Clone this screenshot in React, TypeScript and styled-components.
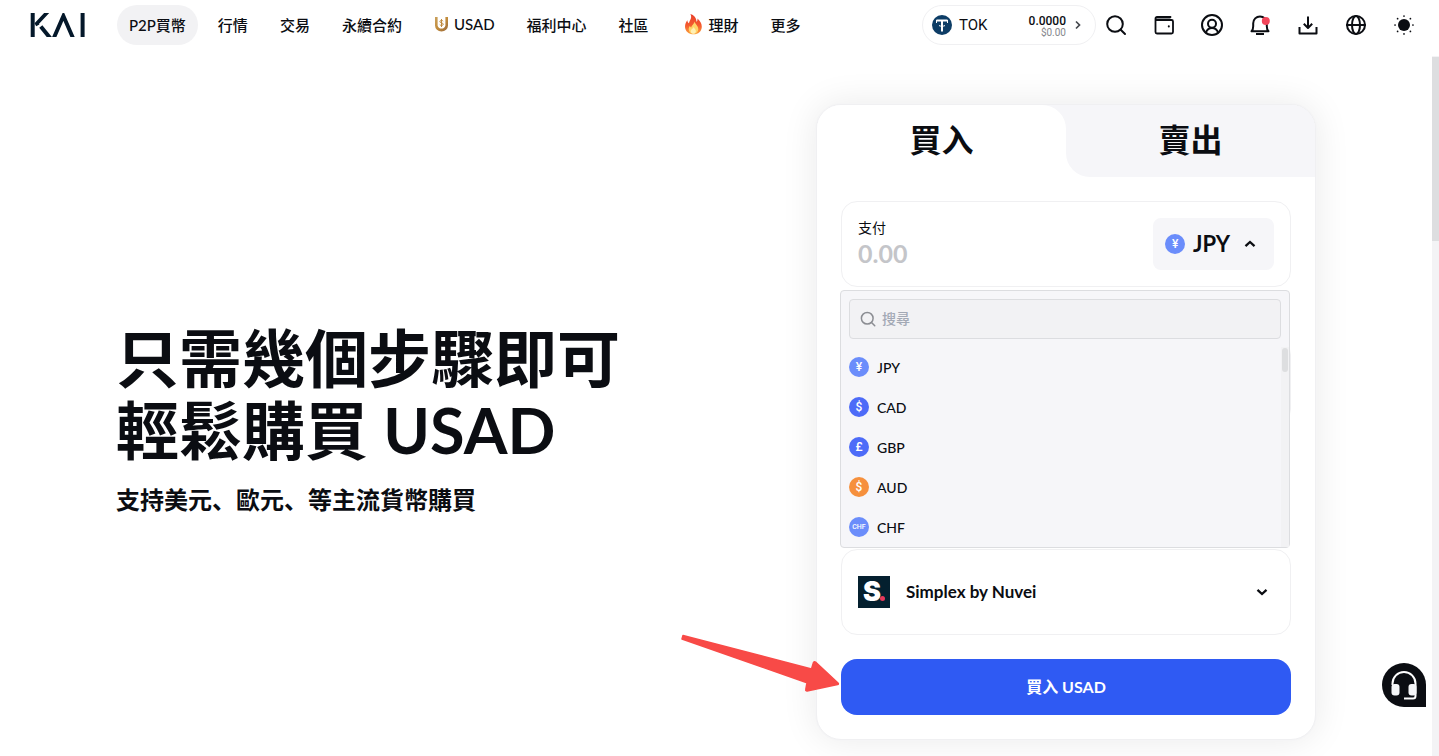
import React, { useState } from 'react';
import styled, { createGlobalStyle, css } from 'styled-components';

const ink = '#0b0d12';
const line = '#f0f0f2';
const soft = '#f6f6f9';
const sans = "Lato, 'Noto Sans CJK SC', 'Noto Sans CJK TC', sans-serif";

const GlobalStyle = createGlobalStyle`
  *, *::before, *::after { box-sizing: border-box; }
  html, body, #root { height: 100%; }
  body { margin: 0; background: #fff; color: ${ink}; font-family: ${sans}; overflow: hidden; }
  button, input { font-family: inherit; color: inherit; }
  button { border: 0; padding: 0; background: none; cursor: pointer; }
  a { color: inherit; text-decoration: none; }
  svg { display: block; flex: none; }
`;

const Page = styled.div`
  display: flex;
  flex-direction: column;
  height: 100%;
`;

const Header = styled.header`
  display: flex;
  align-items: center;
  flex: none;
  padding: 5px 23px 11px 30px;
`;

const Logo = styled.a`
  width: 87px;
  flex: none;
`;

const Nav = styled.nav`
  display: flex;
  gap: 8px;
  flex: 1;
`;

const NavLink = styled.a<{ $active?: boolean }>`
  display: flex;
  align-items: center;
  gap: 4px;
  height: 40px;
  padding: 0 12px 2px;
  border-radius: 20px;
  font-size: 15px;
  font-weight: 500;
  white-space: nowrap;
  background: ${(p) => (p.$active ? '#f2f2f4' : 'transparent')};
`;

const Balance = styled.button`
  display: flex;
  align-items: center;
  width: 174px;
  height: 40px;
  padding: 0 11px 0 9px;
  border: 1px solid ${line};
  border-radius: 20px;
  font-family: Roboto, sans-serif;
`;

const Token = styled.span`
  flex: 1;
  margin-left: 7px;
  text-align: left;
  font-size: 15px;
`;

const Amounts = styled.span`
  display: flex;
  flex-direction: column;
  align-items: flex-end;
  margin-right: 6px;
  padding-top: 4px;
  font-size: 12px;
  line-height: 12px;
  font-weight: 500;

  small {
    font-size: 10px;
    line-height: 12px;
    font-weight: 400;
    color: #85878c;
  }
`;

const Tools = styled.div`
  display: flex;
  gap: 24px;
  margin-left: 8px;
`;

const IconButton = styled.button`
  width: 24px;
  height: 24px;
`;

const Body = styled.div`
  display: flex;
  flex: 1;
  min-height: 0;
`;

const Main = styled.main`
  flex: 1;
  overflow: hidden;
  padding: 48px 32px;
`;

const Hero = styled.section`
  display: flex;
  align-items: center;
  justify-content: space-between;
  max-width: 1200px;
  margin: 0 auto;
`;

const Intro = styled.div`
  padding-bottom: 4px;
`;

const Title = styled.h1`
  margin: 0 0 16px;
  font-size: 63px;
  line-height: 72px;
  font-weight: 700;
`;

const Subtitle = styled.p`
  margin: 0;
  font-size: 24px;
  line-height: 36px;
  font-weight: 700;
`;

const Card = styled.section`
  position: relative;
  width: 500px;
  flex: none;
  border: 1px solid ${line};
  border-radius: 25px;
  background: #fff;
  box-shadow: 0 0 0 1px #f5f5f6, 0 0 36px rgba(0, 0, 0, 0.09);
`;

const TabList = styled.div`
  display: flex;
  border-radius: 24px 24px 0 0;
  overflow: hidden;
  background: linear-gradient(${soft} 50%, #fff 50%);
`;

const Tab = styled.button<{ $active?: boolean }>`
  flex: 1;
  height: 72px;
  padding-bottom: 3px;
  font-size: 32px;
  line-height: 68px;
  font-weight: 700;
  ${(p) =>
    p.$active
      ? css`background: #fff; border-radius: 0 24px 0 0;`
      : css`background: ${soft}; border-radius: 0 0 0 24px;`}
`;

const Form = styled.form`
  padding: 24px;
`;

const Field = styled.div`
  position: relative;
  display: flex;
  align-items: center;
  justify-content: space-between;
  width: 100%;
  height: 86px;
  padding: 0 16px;
  border: 1px solid ${line};
  border-radius: 16px;
  background: #fff;
`;

const ReceiveField = styled(Field)`
  margin: 52px 0 124px;
`;

const AmountGroup = styled.div`
  display: flex;
  flex-direction: column;
  padding-bottom: 2px;
`;

const AmountLabel = styled.label`
  font-size: 14px;
  line-height: 20px;
`;

const AmountInput = styled.input`
  width: 200px;
  height: 30px;
  padding: 0;
  border: 0;
  outline: 0;
  background: none;
  font-size: 25px;
  font-weight: 700;
  &::placeholder { color: #c4c5c9; opacity: 1; }
`;

const CurrencyButton = styled.button`
  display: flex;
  align-items: center;
  gap: 8px;
  height: 52px;
  padding: 0 12px;
  border-radius: 8px;
  background: ${soft};
  font-size: 22px;
  line-height: 24px;
  font-weight: 700;
`;

const Coin = styled.span<{ $color: string; $small?: boolean }>`
  display: flex;
  align-items: center;
  justify-content: center;
  width: 20px;
  height: 20px;
  flex: none;
  border-radius: 50%;
  background: ${(p) => p.$color};
  color: #fff;
  font-family: Roboto, sans-serif;
  font-size: ${(p) => (p.$small ? 7 : 12)}px;
  line-height: 20px;
  font-weight: 500;
`;

const Dropdown = styled.div`
  position: absolute;
  z-index: 1;
  top: 88px;
  left: -2px;
  width: 450px;
  padding: 8px 0 0 8px;
  border: 1px solid #dcdde0;
  border-radius: 4px;
  background: ${soft};
`;

const SearchBox = styled.label`
  display: flex;
  align-items: center;
  gap: 5px;
  height: 40px;
  margin: 0 8px 8px 0;
  padding: 0 9px;
  border: 1px solid #dcdde0;
  border-radius: 4px;
  background: #f2f2f4;
  color: #8b8d92;
`;

const SearchInput = styled.input`
  flex: 1;
  padding: 0 0 2px;
  border: 0;
  outline: 0;
  background: none;
  font-size: 14px;
  font-weight: 500;
  &::placeholder { color: #a3a9b5; opacity: 1; }
`;

const ListArea = styled.div`
  display: flex;
`;

const Options = styled.div`
  flex: 1;
`;

const Option = styled.button`
  display: flex;
  align-items: center;
  gap: 8px;
  width: 100%;
  height: 40px;
  font-size: 14px;
  font-weight: 500;
`;

const ListTrack = styled.div`
  width: 8px;
  padding: 1px;
  background: #f2f2f4;
`;

const ListThumb = styled.div`
  height: 24px;
  border-radius: 3px;
  background: #dddee0;
`;

const ProviderField = styled(Field).attrs({ as: 'button', type: 'button' })`
  justify-content: flex-start;
  gap: 16px;
  font-size: 17px;
  font-weight: 700;
`;

const ProviderName = styled.span`
  flex: 1;
  padding-bottom: 2px;
  text-align: left;
`;

const ChevronBox = styled.span`
  display: flex;
  align-items: center;
  justify-content: center;
  width: 24px;
  height: 24px;
`;

const ProviderLogo = styled.span`
  position: relative;
  width: 32px;
  height: 32px;
  padding-left: 5px;
  background: #04202f;
  color: #fff;
  font-family: Inter, sans-serif;
  font-size: 27px;
  line-height: 32px;
  font-weight: 900;
  text-align: left;

  &::after {
    content: '';
    position: absolute;
    right: 5px;
    bottom: 7px;
    width: 5px;
    height: 5px;
    border-radius: 50%;
    background: #e6395b;
  }
`;

const Submit = styled.button`
  width: 100%;
  height: 56px;
  margin-top: 24px;
  padding-bottom: 3px;
  border-radius: 16px;
  background: #2f5af3;
  color: #fff;
  font-size: 16px;
  font-weight: 700;
`;

const Arrow = styled.svg`
  position: absolute;
  left: -137px;
  bottom: 45px;
  pointer-events: none;
`;

const ScrollTrack = styled.div`
  width: 7px;
  flex: none;
  padding-top: 1px;
  background: #f3f3f5;
`;

const ScrollThumb = styled.div`
  height: 184px;
  background: #dddee0;
`;

const Support = styled.button`
  position: fixed;
  right: 13px;
  bottom: 49px;
  width: 44px;
  height: 44px;
  border-radius: 50% 50% 0 50%;
  background: ${ink};
`;

const KaiLogo = () => (
  <svg width="56" height="26" viewBox="0 0 56 26" fill="none" stroke="#04182a" strokeWidth="4">
    <clipPath id="kai"><rect x="0" y="1" width="56" height="24" /></clipPath>
    <g clipPath="url(#kai)">
      <path d="M2.700 0v26" />
      <path d="M18.500-1L6.800 11.600l1 1.800" strokeWidth="3.700" />
      <path d="M10.800 14.500L20.500 26.500" />
      <path d="M23.600 26.500L33.400 4l9.800 22.500" strokeWidth="3.900" />
      <path d="M52.600 0v26" />
    </g>
  </svg>
);

const UsadIcon = () => (
  <svg width="16" height="16" viewBox="0 0 16 16" fill="none">
    <defs>
      <linearGradient id="gold" x1="0" x2="1" y1="0" y2="1">
        <stop stopColor="#c9a05c" /><stop offset=".5" stopColor="#c28c3c" /><stop offset="1" stopColor="#96663a" />
      </linearGradient>
    </defs>
    <path d="M1 1h2.600v8.500a4 4 0 0 0 7.800 0V1H14v8.500a6.500 6 0 0 1-13 0Z" fill="url(#gold)" />
    <path d="M7.500 3v8M9.200 5.200C8.500 4 5.900 4.200 5.900 5.600c0 1.700 3.400.9 3.400 2.600C9.300 9.700 6.500 9.900 5.800 8.600" stroke="#c08a3e" strokeWidth="1" />
  </svg>
);

const FlameIcon = () => (
  <svg width="24" height="24" viewBox="0 0 24 24">
    <defs>
      <linearGradient id="flame" x1="0" x2="0" y1="0" y2="1">
        <stop stopColor="#e8402a" /><stop offset=".55" stopColor="#f4592f" /><stop offset="1" stopColor="#fba33b" />
      </linearGradient>
    </defs>
    <path d="M9.400 2C13 3 15.500 6 15.500 9.800c.9-.7 1.200-2 .9-3.300 2.600 2 4.400 5 4.400 8.200 0 4.500-3.600 7.600-8.200 7.600S4 19.200 4 14.700c0-2.800 1.200-5 2.400-6.400.1 1.700.7 2.600 1.500 3C8.600 8.200 11.500 6 9.400 2Z" fill="url(#flame)" />
    <path d="M13.600 9.500c.3 2.500 3.700 4.200 3.700 7.700a4.800 4.800 0 0 1-9.600 0c0-1.600.6-2.700 1.300-3.500.2 1 .6 1.500 1.200 1.700.3-2.300 2.900-3 3.400-5.900Z" fill="#ffd469" />
    <path d="M12.700 15c.4 1.600 2.200 2.300 2.200 4.100a2.600 2.600 0 0 1-5.200 0c0-1.900 2.500-2.200 3-4.100Z" fill="#fff0b5" />
  </svg>
);

const TetherIcon = () => (
  <svg width="20" height="20" viewBox="0 0 20 20">
    <circle cx="10" cy="10" r="10" fill="#0d3d66" />
    <path d="M4.500 5.500h11M10 5v11.500" stroke="#fff" strokeWidth="2" />
    <path d="M4.500 5v3M15.500 5v3" stroke="#fff" strokeWidth="1" />
    <path d="M7 10.600c2 .8 4 .8 6 0" stroke="#fff" strokeWidth="1" fill="none" />
  </svg>
);

const Glyph = ({ children, size = 24 }: { children: React.ReactNode; size?: number }) => (
  <svg width={size} height={size} viewBox="0 0 24 24" fill="none" stroke="currentColor" strokeWidth="2" strokeLinecap="round" strokeLinejoin="round">
    {children}
  </svg>
);

const SearchGlyph = ({ size }: { size?: number }) => (
  <Glyph size={size}><circle cx="11" cy="11" r="7.800" /><path d="M16.700 16.700l4.300 4.300" /></Glyph>
);

const Chevron = ({ up }: { up?: boolean }) => (
  <ChevronBox>
    <svg width="12" height="8" viewBox="0 0 12 8" fill="none" stroke={ink} strokeWidth="2.300">
      <path d={up ? 'M1.500 6.200L6 2l4.500 4.200' : 'M1.500 1.800L6 6l4.500-4.200'} />
    </svg>
  </ChevronBox>
);

const tools = [
  { label: '搜尋', icon: <SearchGlyph /> },
  {
    label: '錢包',
    icon: (
      <Glyph>
        <path d="M3.500 4.500h15v3h-15z" fill="#8a8c90" stroke="none" />
        <path d="M18.500 4H5a1.500 1.500 0 0 0-1.500 1.500V19A1.500 1.500 0 0 0 5 20.500h14.500A1.500 1.500 0 0 0 21 19V8.500A1.500 1.500 0 0 0 19.500 7H4" strokeWidth="1.800" />
        <path d="M16.800 13.300v.1" />
      </Glyph>
    ),
  },
  {
    label: '帳戶',
    icon: (
      <Glyph>
        <circle cx="12" cy="12" r="10" />
        <circle cx="12" cy="10.800" r="4" />
        <path d="M5.800 19.500c1.200-3 3.300-4.600 6.200-4.600s5 1.600 6.200 4.600" />
      </Glyph>
    ),
  },
  {
    label: '通知',
    icon: (
      <Glyph>
        <path d="M3.500 18.200h17c-1.300-1.300-1.700-2.700-1.700-5v-3a6.800 6.800 0 0 0-13.600 0v3c0 2.300-.4 3.700-1.700 5Z" />
        <path d="M8 21h8" strokeLinecap="butt" />
        <circle cx="17.800" cy="8" r="4" fill="#f2465a" stroke="none" />
      </Glyph>
    ),
  },
  {
    label: '下載',
    icon: <Glyph><path d="M3.500 14v6.500h17V14M12 3.500v11.300M7.800 10.800l4.200 4.200 4.200-4.200" strokeLinecap="butt" /></Glyph>,
  },
  {
    label: '語言',
    icon: <Glyph><circle cx="12" cy="12" r="9" /><ellipse cx="12" cy="12" rx="4" ry="9" /><path d="M3 12h18" /></Glyph>,
  },
  {
    label: '主題',
    icon: (
      <Glyph>
        <circle cx="12" cy="12" r="6" fill="currentColor" stroke="none" />
        <path d="M12 3v.1M12 20.900v.1M3 12h.1M20.900 12h.1M5.600 5.600v.1M18.400 5.600v.1M5.600 18.300v.1M18.400 18.300v.1" strokeWidth="1.700" />
      </Glyph>
    ),
  },
];

const navItems = [
  { label: 'P2P買幣', active: true },
  { label: '行情' },
  { label: '交易' },
  { label: '永續合約' },
  { label: 'USAD', icon: <UsadIcon /> },
  { label: '福利中心' },
  { label: '社區' },
  { label: '理財', icon: <FlameIcon /> },
  { label: '更多' },
];

const currencies = [
  { code: 'JPY', sign: '¥', color: '#6b8dfb' },
  { code: 'CAD', sign: '$', color: '#4d6bf8' },
  { code: 'GBP', sign: '£', color: '#4d6bf8' },
  { code: 'AUD', sign: '$', color: '#f6903d' },
  { code: 'CHF', sign: 'CHF', color: '#6b8dfb' },
];

export default function App() {
  const [selected, setSelected] = useState(currencies[0]);
  const [open, setOpen] = useState(true);

  return (
    <>
      <GlobalStyle />
      <Page lang="zh-Hans">
        <Header>
          <Logo href="#" aria-label="KAI"><KaiLogo /></Logo>
          <Nav>
            {navItems.map((item) => (
              <NavLink key={item.label} href="#" $active={item.active}>
                {item.icon}
                {item.label}
              </NavLink>
            ))}
          </Nav>
          <Balance type="button">
            <TetherIcon />
            <Token>TOK</Token>
            <Amounts>0.0000<small>$0.00</small></Amounts>
            <svg width="12" height="12" viewBox="0 0 12 12" fill="none" stroke="#44474d" strokeWidth="1.700">
              <path d="M4 2.500L7.500 6 4 9.500" />
            </svg>
          </Balance>
          <Tools>
            {tools.map((tool) => (
              <IconButton key={tool.label} type="button" aria-label={tool.label}>{tool.icon}</IconButton>
            ))}
          </Tools>
        </Header>
        <Body>
          <Main>
            <Hero>
              <Intro>
                <Title>只需幾個步驟即可<br />輕鬆購買 USAD</Title>
                <Subtitle>支持美元、歐元、等主流貨幣購買</Subtitle>
              </Intro>
              <Card>
                <TabList role="tablist">
                  <Tab type="button" role="tab" aria-selected="true" $active>買入</Tab>
                  <Tab type="button" role="tab" aria-selected="false">賣出</Tab>
                </TabList>
                <Form onSubmit={(e) => e.preventDefault()}>
                  <Field>
                    <AmountGroup>
                      <AmountLabel htmlFor="amount">支付</AmountLabel>
                      <AmountInput id="amount" placeholder="0.00" inputMode="decimal" />
                    </AmountGroup>
                    <CurrencyButton type="button" aria-haspopup="listbox" aria-expanded={open} onClick={() => setOpen(!open)}>
                      <Coin $color={selected.color} $small={selected.sign.length > 1}>{selected.sign}</Coin>
                      {selected.code}
                      <Chevron up={open} />
                    </CurrencyButton>
                    {open && (
                      <Dropdown>
                        <SearchBox>
                          <SearchGlyph size={18} />
                          <SearchInput type="text" placeholder="搜尋" aria-label="搜尋" />
                        </SearchBox>
                        <ListArea>
                          <Options role="listbox">
                            {currencies.map((c) => (
                              <Option
                                key={c.code}
                                type="button"
                                role="option"
                                aria-selected={c === selected}
                                onClick={() => { setSelected(c); setOpen(false); }}
                              >
                                <Coin $color={c.color} $small={c.sign.length > 1}>{c.sign}</Coin>
                                {c.code}
                              </Option>
                            ))}
                          </Options>
                          <ListTrack><ListThumb /></ListTrack>
                        </ListArea>
                      </Dropdown>
                    )}
                  </Field>
                  <ReceiveField />
                  <ProviderField>
                    <ProviderLogo aria-hidden="true">S</ProviderLogo>
                    <ProviderName>Simplex by Nuvei</ProviderName>
                    <Chevron />
                  </ProviderField>
                  <Submit type="submit">買入 USAD</Submit>
                </Form>
                <Arrow width="162" height="64" viewBox="680 630 162 64" aria-hidden="true">
                  <path
                    d="M683 635.500L811.500 669l2-6.500c.4-1 1.200-1 2-.4L838 683c.7.8.4 1.400-.4 1.600l-30.500 6.300c-1 .1-1.500-.5-1.300-1.400l1.200-6.800L682 639Z"
                    fill="#f84a47" stroke="#f84a47" strokeWidth="1.500" strokeLinejoin="round"
                  />
                </Arrow>
              </Card>
            </Hero>
          </Main>
          <ScrollTrack><ScrollThumb /></ScrollTrack>
        </Body>
        <Support type="button" aria-label="客服">
          <svg width="44" height="44" viewBox="0 0 44 44" fill="none">
            <path d="M10.500 22v-1.500a11.500 11.500 0 0 1 23 0V33a2.500 2.500 0 0 1-2.500 2.500h-9" stroke="#fff" strokeWidth="2" />
            <rect x="9.500" y="21" width="8" height="11.500" rx="3" fill="#f5f6f8" />
            <rect x="26.500" y="21" width="8" height="11.500" rx="3" fill="#f5f6f8" />
          </svg>
        </Support>
      </Page>
    </>
  );
}
